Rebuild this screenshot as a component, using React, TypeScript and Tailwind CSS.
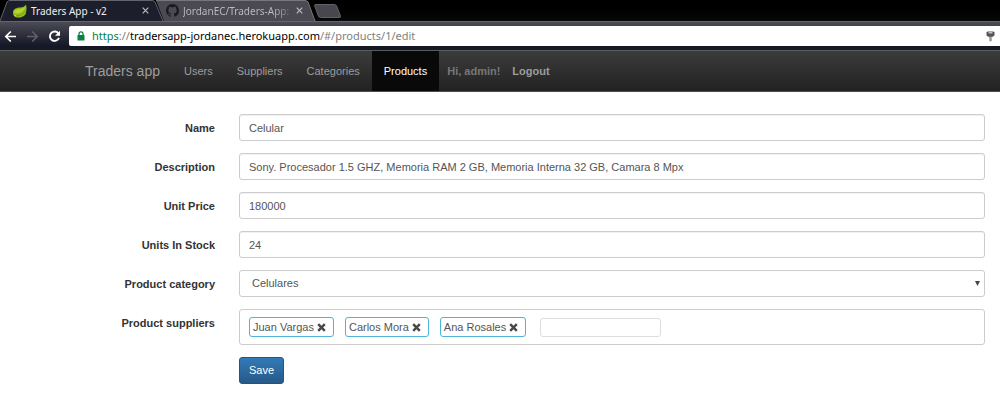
import { useState, type ReactNode } from 'react';

const inputClass =
  'h-[27px] w-full rounded-[3px] border border-[#ccc] bg-white px-[9px] text-[11px] text-[#555] shadow-[inset_0_1px_1px_rgba(0,0,0,0.06)] outline-none focus:border-[#66afe9]';

function Leaf() {
  return (
    <svg className="h-4 w-4 shrink-0" viewBox="0 0 16 16" aria-hidden="true">
      <path d="M14 1.6C12.8 3.6 11 4.4 8.4 4.6C4.6 4.8 1.4 5.8 1 9C.7 11.2 1.6 13.2 3.6 14.2C7.2 15.4 12.6 13.8 13.8 10.4C14.6 8.2 14.8 4.6 14 1.6Z" fill="#93bd1e" />
      <path d="M13.3 3.8C12 5.6 10 6 7.4 6.2C4.4 6.4 2.2 7.4 2 9.8C6 11 11 10.2 13.3 3.8Z" fill="#b9d62c" />
      <path d="M4 12.8C8 12.8 11.4 11.4 13.4 7.6" fill="none" stroke="#6d9414" strokeWidth=".8" />
      <circle cx="3.2" cy="12.6" r=".6" fill="#dfeaa0" />
    </svg>
  );
}

function GitHubMark() {
  return (
    <svg className="h-[13px] w-[13px] shrink-0" viewBox="0 0 16 16" fill="#1b1b1f" aria-hidden="true">
      <path d="M8 0C3.58 0 0 3.58 0 8c0 3.54 2.29 6.53 5.47 7.59.4.07.55-.17.55-.38 0-.19-.01-.82-.01-1.49-2.01.37-2.53-.49-2.69-.94-.09-.23-.48-.94-.82-1.13-.28-.15-.68-.52-.01-.53.63-.01 1.08.58 1.23.82.72 1.21 1.87.87 2.33.66.07-.52.28-.87.51-1.07-1.78-.2-3.64-.89-3.64-3.95 0-.87.31-1.59.82-2.15-.08-.2-.36-1.02.08-2.12 0 0 .67-.21 2.2.82.64-.18 1.32-.27 2-.27s1.36.09 2 .27c1.53-1.04 2.2-.82 2.2-.82.44 1.1.16 1.92.08 2.12.51.56.82 1.27.82 2.15 0 3.07-1.87 3.75-3.65 3.95.29.25.54.73.54 1.48 0 1.07-.01 1.93-.01 2.2 0 .21.15.46.55.38A8.01 8.01 0 0 0 16 8c0-4.42-3.58-8-8-8z" />
    </svg>
  );
}

function CloseTab({ label }: { label: string }) {
  return (
    <button type="button" aria-label={label} className="flex h-3 w-3 shrink-0 items-center justify-center text-[#b9b9bd]">
      <svg className="h-[7px] w-[7px]" viewBox="0 0 7 7" stroke="currentColor" strokeWidth="1.2">
        <path d="M.7.7l5.6 5.6M6.3.7L.7 6.3" />
      </svg>
    </button>
  );
}

function BrowserChrome() {
  return (
    <header className="font-['Noto_Sans','Open_Sans',sans-serif]">
      <div className="flex h-[21px] bg-linear-to-b from-black to-[#080909]">
        <div className="relative z-10 flex h-[21px] w-[164px] items-center pr-[13px] pl-3">
          <svg className="absolute inset-0 h-full w-full" viewBox="0 0 164 21" preserveAspectRatio="none" aria-hidden="true">
            <path d="M0 21L7 2Q8 .5 10 .5H152Q154 .5 155 2L163 21Z" fill="#1c1e2b" />
            <path d="M0 21L7 2Q8 .5 10 .5H152Q154 .5 155 2L163 21" fill="none" stroke="#62636d" />
          </svg>
          <div className="relative flex w-full items-center gap-[3px]">
            <Leaf />
            <span className="grow text-[10px] leading-4 whitespace-nowrap text-[#f0f0f0]">Traders App - v2</span>
            <CloseTab label="Close Traders App" />
          </div>
        </div>
        <div className="relative -ml-2 flex h-[21px] w-[160px] items-center pr-[12px] pl-[10px]">
          <svg className="absolute inset-0 h-full w-full" viewBox="0 0 160 21" preserveAspectRatio="none" aria-hidden="true">
            <path d="M0 .5H149Q151 .5 152 2L159 21H8Z" fill="#4b4a52" />
            <path d="M0 .5H149Q151 .5 152 2L159 21" fill="none" stroke="#77767d" />
          </svg>
          <div className="relative flex w-full items-center gap-1">
            <GitHubMark />
            <span className="grow bg-linear-to-r from-[#bdbdc1] from-85% to-[#77767d] bg-clip-text text-[10px] leading-4 whitespace-nowrap text-transparent">JordanEC/Traders-App:</span>
            <CloseTab label="Close JordanEC/Traders-App" />
          </div>
        </div>
        <button type="button" aria-label="New tab" className="mt-1 -ml-[3px] h-[15px] w-7">
          <svg className="h-full w-full" viewBox="0 0 28 15">
            <path d="M1.5 1.5Q1.5.5 3 .5H21Q23 .5 23.6 2L27.5 12Q28 13.5 26.5 13.5H7.5Q6 13.5 5.4 12Z" fill="#48474e" stroke="#626168" />
          </svg>
        </button>
      </div>
      <div className="flex h-[29px] items-center border-t border-[#65656f] bg-linear-to-b from-[#4d4c55] to-[#151827] to-85% pl-1">
        <nav aria-label="Browser" className="flex w-[65px] items-center gap-[9px]">
          <button type="button" aria-label="Back" className="text-white">
            <svg className="h-[13px] w-[13px]" viewBox="0 0 13 13" fill="none" stroke="currentColor" strokeWidth="1.7"><path d="M12 6.5H2M6.8 1.5l-5 5 5 5" /></svg>
          </button>
          <button type="button" aria-label="Forward" disabled className="text-[#5e5f68]">
            <svg className="h-[13px] w-[13px]" viewBox="0 0 13 13" fill="none" stroke="currentColor" strokeWidth="1.7"><path d="M1 6.5H11M6.2 1.5l5 5-5 5" /></svg>
          </button>
          <button type="button" aria-label="Reload" className="text-white">
            <svg className="h-[13px] w-[13px]" viewBox="0 0 13 13" fill="none" stroke="currentColor" strokeWidth="1.9"><path d="M10.6 3.7A4.7 4.7 0 1 0 11 7.9" /><path d="M12 .8V5.8H7Z" fill="currentColor" stroke="none" /></svg>
          </button>
        </nav>
        <div className="flex h-5 grow items-center rounded-l-[2px] bg-white pr-[5px] pl-2">
          <svg className="h-[10px] w-2 shrink-0" viewBox="0 0 8 10" aria-hidden="true">
            <path d="M2 5V2.8a2 2 0 0 1 4 0V5" fill="none" stroke="#0b8043" strokeWidth="1.3" />
            <rect x=".5" y="4" width="7" height="5.6" rx=".5" fill="#0b8043" />
          </svg>
          <p className="ml-[7px] grow text-[11px] leading-4 whitespace-nowrap text-[#808080]">
            <span className="text-[#0b8043]">https</span>://<span className="text-black">tradersapp-jordanec.herokuapp.com</span>/#/products/1/edit
          </p>
          <button type="button" aria-label="Saved passwords">
            <svg className="h-[11px] w-[9px]" viewBox="0 0 9 11">
              <path d="M1.5.5h6L8.5 1.5v3L6.8 5.8H2.2L.5 4.5V1.5Z" fill="#555" />
              <path d="M2.6 1.2h3.8v1.2H2.6Z" fill="#ddd" />
              <path d="M3.5 5h2v5.2h-2Z" fill="#666" />
              <path d="M4.5 6v4" stroke="#bbb" strokeWidth=".6" />
            </svg>
          </button>
        </div>
      </div>
    </header>
  );
}

function Navbar() {
  const link = 'flex items-center px-3 text-[11px] text-[#9d9d9d] hover:text-white';
  return (
    <nav aria-label="Main" className="flex h-[42px] border-y border-t-[#5b5c5c] border-b-[#4d4d4d] bg-linear-to-b from-[#3c3c3c] to-[#222] pl-[85px]">
      <a href="#/" className="flex items-center pr-3 text-[14px] text-[#9d9d9d]">Traders app</a>
      <a href="#/users" className={link}>Users</a>
      <a href="#/suppliers" className={link}>Suppliers</a>
      <a href="#/categories" className={link}>Categories</a>
      <a href="#/products" aria-current="page" className="flex items-center bg-[#090909] px-3 text-[11px] text-white">Products</a>
      <span className="flex items-center pl-2 text-[11px] font-bold text-[#777]">Hi, admin!</span>
      <a href="#/logout" className="flex items-center px-3 text-[11px] font-bold text-[#9d9d9d]">Logout</a>
    </nav>
  );
}

function Field({ id, label, children }: { id: string; label: string; children: ReactNode }) {
  return (
    <div className="grid grid-cols-[215px_1fr] gap-x-6">
      <label htmlFor={id} className="pt-[5px] text-right text-[11px] leading-[18px] font-bold text-[#333]">{label}</label>
      <div className="min-w-0">{children}</div>
    </div>
  );
}

const fields = [
  { id: 'name', label: 'Name', value: 'Celular' },
  { id: 'description', label: 'Description', value: 'Sony. Procesador 1.5 GHZ, Memoria RAM 2 GB, Memoria Interna 32 GB, Camara 8 Mpx' },
  { id: 'unit-price', label: 'Unit Price', value: '180000' },
  { id: 'units-in-stock', label: 'Units In Stock', value: '24' },
];

export default function App() {
  const [suppliers, setSuppliers] = useState(['Juan Vargas', 'Carlos Mora', 'Ana Rosales']);
  return (
    <div className="min-h-screen bg-white font-['Liberation_Sans',Arial,sans-serif]">
      <BrowserChrome />
      <Navbar />
      <main className="pt-[22px] pr-[15px]">
        <form className="flex flex-col gap-3" onSubmit={(e) => e.preventDefault()}>
          {fields.map((f) => (
            <Field key={f.id} id={f.id} label={f.label}>
              <input id={f.id} defaultValue={f.value} className={inputClass} />
            </Field>
          ))}
          <Field id="category" label="Product category">
            <div className="relative">
              <select id="category" className="h-[27px] w-full appearance-none rounded-[3px] border border-[#ccc] bg-white px-3 text-[11px] text-[#555] outline-none">
                <option>Celulares</option>
              </select>
              <svg className="pointer-events-none absolute top-[11px] right-[5px] h-[5px] w-[5px]" viewBox="0 0 5 5" aria-hidden="true"><path d="M0 0H5L2.5 5Z" fill="#444" /></svg>
            </div>
          </Field>
          <Field id="suppliers" label="Product suppliers">
            <div className="flex min-h-9 flex-wrap items-center gap-[11px] rounded-[3px] border border-[#ccc] px-[9px]">
              {suppliers.map((s) => (
                <span key={s} className="flex h-5 items-center gap-[3px] rounded-[3px] border border-[#4fb3dc] pr-[7px] pl-[3px] text-[11px] text-[#555]">
                  {s}
                  <button type="button" aria-label={`Remove ${s}`} onClick={() => setSuppliers(suppliers.filter((x) => x !== s))}>
                    <svg className="h-[9px] w-[9px]" viewBox="0 0 9 9" stroke="#484848" strokeWidth="2.4"><path d="M1.2 1.2l6.6 6.6M7.8 1.2L1.2 7.8" /></svg>
                  </button>
                </span>
              ))}
              <input id="suppliers" className="ml-[3px] h-[19px] w-[121px] rounded-[3px] border border-[#ddd] px-1 text-[11px] text-[#555] outline-none" />
            </div>
          </Field>
          <div className="pl-[239px]">
            <button type="submit" className="h-[27px] rounded-[3px] border border-[#245580] bg-linear-to-b from-[#337ab7] to-[#265a88] px-[9px] text-[11px] text-white">Save</button>
          </div>
        </form>
      </main>
    </div>
  );
}
